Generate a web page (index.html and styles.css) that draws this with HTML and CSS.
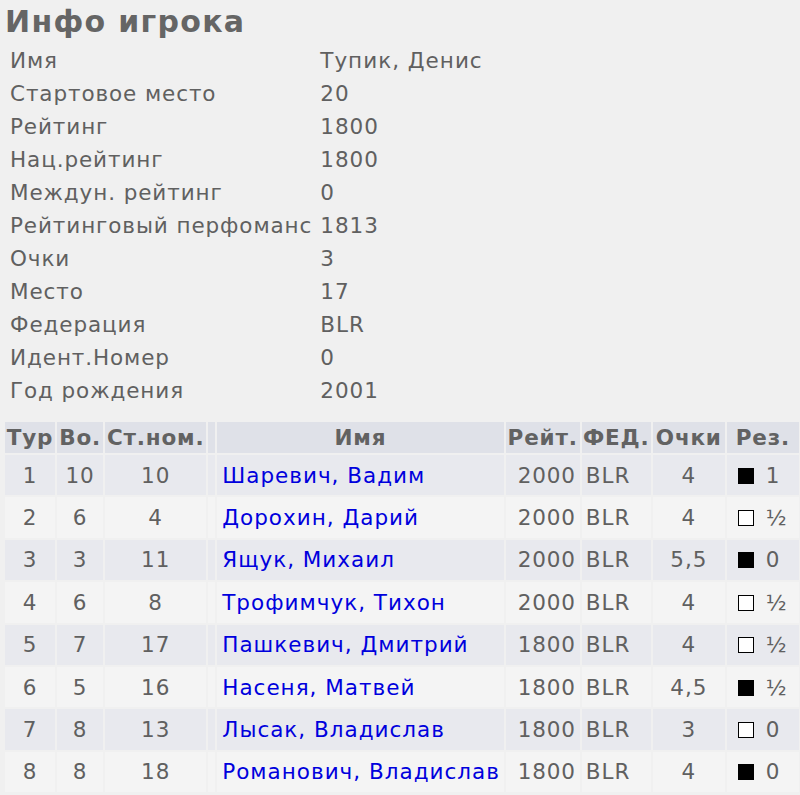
FILE: index.html
```html
<!DOCTYPE html>
<html lang="ru">
<head>
<meta charset="utf-8">
<title>Инфо игрока</title>
<link rel="stylesheet" href="styles.css">
</head>
<body>
<h2 class="title">Инфо игрока</h2>
<table class="info">
  <tr><td class="lbl">Имя</td><td>Тупик, Денис</td></tr>
  <tr><td class="lbl">Стартовое место</td><td>20</td></tr>
  <tr><td class="lbl">Рейтинг</td><td>1800</td></tr>
  <tr><td class="lbl">Нац.рейтинг</td><td>1800</td></tr>
  <tr><td class="lbl">Междун. рейтинг</td><td>0</td></tr>
  <tr><td class="lbl">Рейтинговый перфоманс</td><td>1813</td></tr>
  <tr><td class="lbl">Очки</td><td>3</td></tr>
  <tr><td class="lbl">Место</td><td>17</td></tr>
  <tr><td class="lbl">Федерация</td><td>BLR</td></tr>
  <tr><td class="lbl">Идент.Номер</td><td>0</td></tr>
  <tr><td class="lbl">Год рождения</td><td>2001</td></tr>
</table>
<table class="games">
  <colgroup>
    <col class="c-tur"><col class="c-bo"><col class="c-st"><col class="c-fl"><col class="c-name"><col class="c-rt"><col class="c-fed"><col class="c-pts"><col class="c-res">
  </colgroup>
  <thead>
    <tr><th>Тур</th><th>Во.</th><th>Ст.ном.</th><th></th><th>Имя</th><th>Рейт.</th><th>ФЕД.</th><th>Очки</th><th>Рез.</th></tr>
  </thead>
  <tbody>
    <tr class="odd"><td class="c">1</td><td class="c">10</td><td class="c">10</td><td></td><td class="l"><a href="#">Шаревич, Вадим</a></td><td class="r">2000</td><td class="l">BLR</td><td class="c">4</td><td class="l"><span class="sq blk"></span>1</td></tr>
    <tr class="even"><td class="c">2</td><td class="c">6</td><td class="c">4</td><td></td><td class="l"><a href="#">Дорохин, Дарий</a></td><td class="r">2000</td><td class="l">BLR</td><td class="c">4</td><td class="l"><span class="sq wht"></span>½</td></tr>
    <tr class="odd"><td class="c">3</td><td class="c">3</td><td class="c">11</td><td></td><td class="l"><a href="#">Ящук, Михаил</a></td><td class="r">2000</td><td class="l">BLR</td><td class="c">5,5</td><td class="l"><span class="sq blk"></span>0</td></tr>
    <tr class="even"><td class="c">4</td><td class="c">6</td><td class="c">8</td><td></td><td class="l"><a href="#">Трофимчук, Тихон</a></td><td class="r">2000</td><td class="l">BLR</td><td class="c">4</td><td class="l"><span class="sq wht"></span>½</td></tr>
    <tr class="odd"><td class="c">5</td><td class="c">7</td><td class="c">17</td><td></td><td class="l"><a href="#">Пашкевич, Дмитрий</a></td><td class="r">1800</td><td class="l">BLR</td><td class="c">4</td><td class="l"><span class="sq wht"></span>½</td></tr>
    <tr class="even"><td class="c">6</td><td class="c">5</td><td class="c">16</td><td></td><td class="l"><a href="#">Насеня, Матвей</a></td><td class="r">1800</td><td class="l">BLR</td><td class="c">4,5</td><td class="l"><span class="sq blk"></span>½</td></tr>
    <tr class="odd"><td class="c">7</td><td class="c">8</td><td class="c">13</td><td></td><td class="l"><a href="#">Лысак, Владислав</a></td><td class="r">1800</td><td class="l">BLR</td><td class="c">3</td><td class="l"><span class="sq wht"></span>0</td></tr>
    <tr class="even"><td class="c">8</td><td class="c">8</td><td class="c">18</td><td></td><td class="l"><a href="#">Романович, Владислав</a></td><td class="r">1800</td><td class="l">BLR</td><td class="c">4</td><td class="l"><span class="sq blk"></span>0</td></tr>
  </tbody>
</table>
</body>
</html>
```
FILE: styles.css
```css
html, body {
  margin: 0;
  padding: 0;
  background: #f0f0f0;
  overflow: hidden;
}
body {
  padding-left: 3px;
  font-family: "DejaVu Sans", Verdana, sans-serif;
  font-size: 21.5px;
  letter-spacing: 1px;
  color: #606060;
}
.title {
  margin: 3px 0 2px 2px;
  font-size: 30px;
  letter-spacing: 1.3px;
  line-height: 38px;
  font-weight: bold;
  color: #656565;
}
.info {
  border-collapse: separate;
  border-spacing: 2px;
}
.info td {
  height: 31px;
  padding: 0 5px;
  line-height: 25px;
  white-space: nowrap;
}
.info td.lbl {
  width: 290px;
  padding-right: 1px;
  letter-spacing: 0.9px;
}
.games {
  margin-top: 12px;
  border-collapse: separate;
  border-spacing: 2px;
  table-layout: fixed;
  width: 798px;
}
.c-tur { width: 50px; }
.c-bo { width: 46px; }
.c-st { width: 101px; }
.c-fl { width: 7px; }
.c-name { width: 286px; }
.c-rt { width: 74px; }
.c-fed { width: 69px; }
.c-pts { width: 72px; }
.c-res { width: 72px; }
.games th {
  background: #dfe1e8;
  height: 31px;
  padding: 0;
  font-weight: bold;
  text-align: center;
  white-space: nowrap;
  letter-spacing: 0.8px;
  color: #626262;
}
.games td {
  height: 40.4px;
  padding: 0 4px;
  white-space: nowrap;
  overflow: hidden;
}
.games tr.odd td { background: #e8e9ee; }
.games tr.even td { background: #f4f4f4; }
.games td.c { text-align: center; }
.games td.l { text-align: left; }
.games td.r { text-align: right; letter-spacing: 0.8px; }
.games td.l a { padding-left: 1px; }
.games a {
  color: #0000dd;
  text-decoration: none;
}
.sq {
  display: inline-block;
  width: 14px;
  height: 14px;
  border: 1px solid #000;
  margin: 0 12px 0 7px;
  vertical-align: -1px;
}
.sq.blk { background: #000; }
.sq.wht { background: #fff; }
```
